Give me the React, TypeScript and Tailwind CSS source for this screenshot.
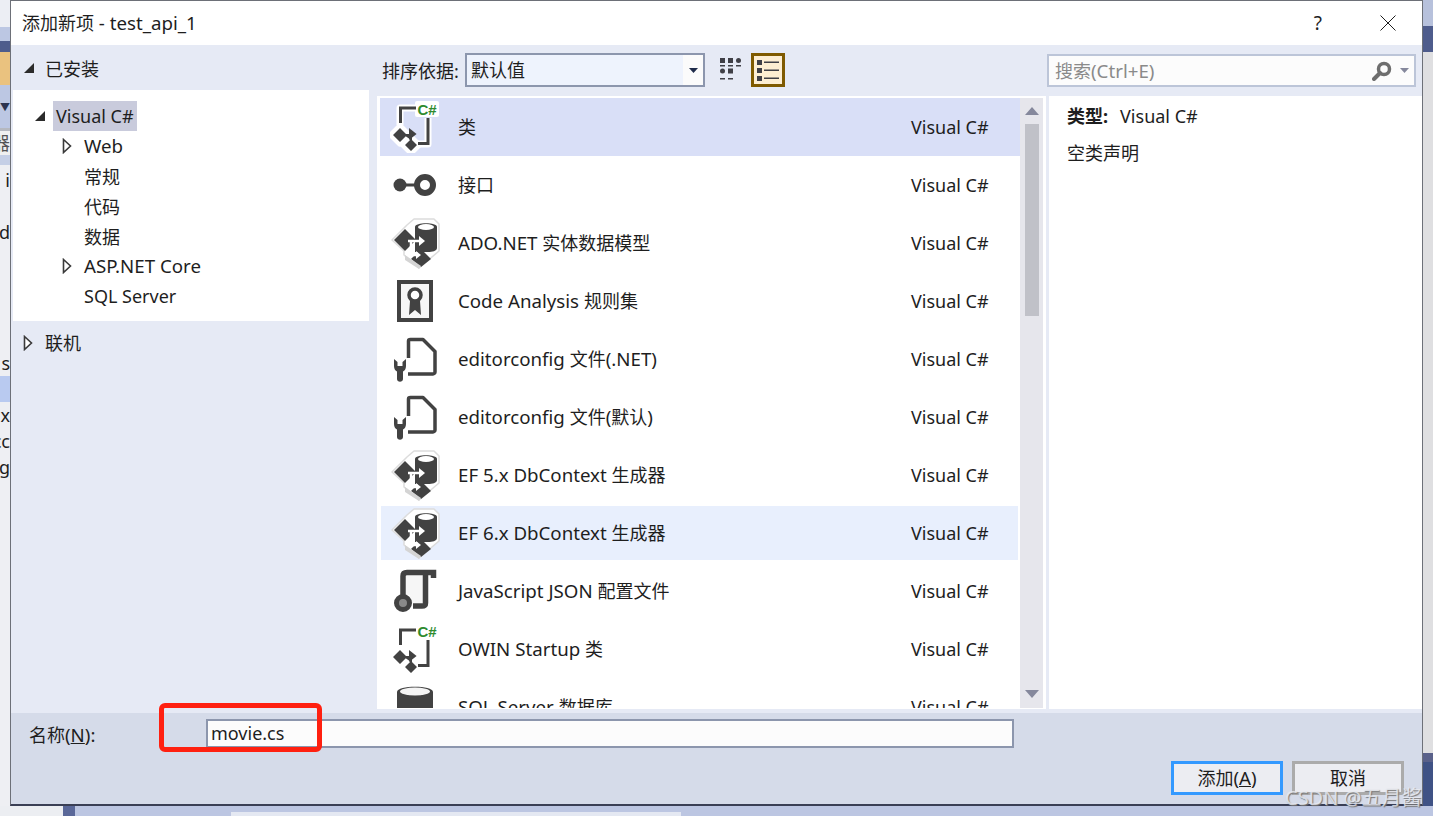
import React from "react";

const D = "#424242";

/* Latin runs sit a touch larger than the CJK ones in the reference's UI font */
function T({ s }: { s: string }) {
  return (
    <>
      {s.split(/([\x00-\x7F]+)/).map((p, i) =>
        /[\x00-\x7F]/.test(p) ? (
          <span key={i} className="text-[18.700px]">{p}</span>
        ) : (
          <React.Fragment key={i}>{p}</React.Fragment>
        ),
      )}
    </>
  );
}

const Filled = () => (
  <svg width="12" height="12" viewBox="0 0 12 12" className="shrink-0"><path d="M11 1V11H1Z" fill="#2b2b2b" /></svg>
);
const Hollow = () => (
  <svg width="10" height="16" viewBox="0 0 10 16" className="shrink-0"><path d="M1.500 1.500L8.500 8L1.500 14.500Z" fill="#fff" stroke="#3a3a3a" strokeWidth="1.600" /></svg>
);

const ClassIcon = () => (
  <svg width="52" height="52" viewBox="0 0 52 52">
    <g stroke="#fff" strokeWidth="7" fill="none" strokeLinejoin="round">
      <path d="M26 7H10V24M38 17V43H27" />
      <path d="M2 34L10 26L18 34L10 42ZM14 44L21 37L28 44L21 51Z" fill="#fff" />
    </g>
    <rect x="25" y="0" width="24" height="16" rx="2" fill="#fff" />
    <path d="M26 7H10.500V22M38 17V42.500H28" stroke={D} strokeWidth="3" fill="none" />
    <path d="M3 34L10 27L17 34L10 41ZM15 44L21 38L27 44L21 50Z" fill={D} />
    <path d="M14 34H21V39M20 29L25 33L20 37Z" stroke={D} strokeWidth="2" fill={D} />
    <text x="27.500" y="14" fill="#2e8b2e" fontSize="15" fontWeight="700" fontFamily="'Liberation Sans',sans-serif">C#</text>
  </svg>
);

const InterfaceIcon = () => (
  <svg width="52" height="52" viewBox="0 0 52 52">
    <circle cx="10" cy="26" r="6.500" fill={D} />
    <path d="M14 26H26" stroke={D} strokeWidth="3" />
    <circle cx="35" cy="26" r="8" fill="#fff" stroke={D} strokeWidth="6" />
  </svg>
);

const DbIcon = () => (
  <svg width="52" height="52" viewBox="0 0 52 52">
    <path d="M2 23L17 8L24 2H44L49 7V34L29 51L14 38V34Z" fill="#fff" stroke="#dcdcdc" strokeWidth="1.500" strokeLinejoin="round" />
    <path d="M25 10C25 5 47 5 47 10V31C47 34 42 35 38 35H25Z" fill={D} />
    <ellipse cx="36" cy="10" rx="8" ry="3" fill="#fff" />
    <path d="M4 23L15 12L26 23L15 34Z" fill={D} />
    <path d="M21 42L31 32L41 42L31 50Z" fill={D} />
    <path d="M18 24H30M21 24V38H28" stroke="#fff" strokeWidth="2.500" fill="none" />
    <path d="M29 19L35 24L29 29Z" fill="#fff" />
    <path d="M26 34L31 38L26 42Z" fill="#fff" />
    <path d="M15 38L15 43L29 52L31 49Z" fill="#d4d4d4" />
  </svg>
);

const CertIcon = () => (
  <svg width="52" height="52" viewBox="0 0 52 52">
    <rect x="9" y="7" width="32" height="38" fill="#f6f6f6" stroke={D} strokeWidth="4" />
    <circle cx="25" cy="20" r="6" fill="#fff" stroke={D} strokeWidth="3.500" />
    <path d="M20 26L19 40L25 35L31 40L30 26Z" fill={D} />
  </svg>
);

const ConfigIcon = () => (
  <svg width="52" height="52" viewBox="0 0 52 52">
    <path d="M18.500 25V8C18.500 7 19.500 6.500 20.500 6.500H33L45 18.500V39C45 40 44 41 43 41H18" fill="#fff" stroke={D} strokeWidth="3.500" strokeLinejoin="round" />
    <path d="M4 26V33C4 36 5.500 38 7 38.500V46C7 49.500 13 49.500 13 46V38.500C14.500 38 16 36 16 33V26L12.500 29V33H7.500V29Z" fill={D} />
  </svg>
);

const ScrollIcon = () => (
  <svg width="52" height="52" viewBox="0 0 52 52">
    <path d="M16 10H33V38H20V30H16Z" fill="#f6f6f6" />
    <path d="M13 33V11Q13 7.500 17 7.500H43.500V13M35.500 9V38Q35.500 41 32 41H23" fill="none" stroke={D} strokeWidth="5.500" />
    <circle cx="13" cy="38" r="6.500" fill="#8a8a8a" stroke={D} strokeWidth="5" />
  </svg>
);

const SqlIcon = () => (
  <svg width="52" height="52" viewBox="0 0 52 52">
    <path d="M7 11C7 4 43 4 43 11V52H7Z" fill={D} />
    <ellipse cx="25" cy="10.500" rx="15" ry="4" fill="#f4f4f4" />
  </svg>
);

const rows: { icon: React.ReactNode; t: string; bg?: string }[] = [
  { icon: <ClassIcon />, t: "类", bg: "sel" },
  { icon: <InterfaceIcon />, t: "接口" },
  { icon: <DbIcon />, t: "ADO.NET 实体数据模型" },
  { icon: <CertIcon />, t: "Code Analysis 规则集" },
  { icon: <ConfigIcon />, t: "editorconfig 文件(.NET)" },
  { icon: <ConfigIcon />, t: "editorconfig 文件(默认)" },
  { icon: <DbIcon />, t: "EF 5.x DbContext 生成器" },
  { icon: <DbIcon />, t: "EF 6.x DbContext 生成器", bg: "hover" },
  { icon: <ScrollIcon />, t: "JavaScript JSON 配置文件" },
  { icon: <ClassIcon />, t: "OWIN Startup 类" },
  { icon: <SqlIcon />, t: "SQL Server 数据库" },
];

const tree = [
  { t: <T s="Web" />, k: "w", arrow: true },
  { t: <span className="mt-[2px] block">常规</span>, k: "g" },
  { t: <span className="mt-[2px] block">代码</span>, k: "c" },
  { t: <span className="mt-[2px] block">数据</span>, k: "s" },
  { t: <T s="ASP.NET Core" />, k: "a", arrow: true },
  { t: "SQL Server", k: "q" },
];

function Row({ icon, t, bg }: { icon: React.ReactNode; t: string; bg?: string }) {
  if (bg === "hover")
    return (
      <div className="h-[58px] shrink-0 py-[2px]">
        <div className="ml-[2px] mr-[2px] flex h-[54px] items-center bg-[#e8effd]">
          <div className="w-[77px] shrink-0 pl-[9px]">{icon}</div>
          <span className="flex-1 whitespace-nowrap"><T s={t} /></span>
          <span className="w-[107px] shrink-0 whitespace-nowrap">Visual C#</span>
        </div>
      </div>
    );
  return (
    <div className={`flex h-[58px] shrink-0 items-center ${bg === "sel" ? "ml-[1px] bg-[#d9dff7]" : ""}`}>
      <div className={`shrink-0 ${bg === "sel" ? "w-[78px] pl-[10px]" : "w-[79px] pl-[11px]"}`}>{icon}</div>
      <span className="flex-1 whitespace-nowrap"><T s={t} /></span>
      <span className="w-[109px] shrink-0 whitespace-nowrap">Visual C#</span>
    </div>
  );
}

export default function App() {
  return (
    <div className="relative flex h-[816px] w-[1433px] flex-col overflow-hidden bg-[#bcc6e2] font-['Noto_Sans','Noto_Sans_CJK_SC',sans-serif] text-[18px] leading-[24px] text-[#1e1e1e]">
      <div className="flex h-[806px] shrink-0">
        {/* window behind: left edge */}
        <div className="flex w-[10px] shrink-0 flex-col overflow-hidden bg-[#eeeff3]">
          <div className="h-[27px] bg-[#eceef4]" />
          <div className="h-[14px] bg-[#bcc7e3]" />
          <div className="h-[11px] bg-[#4e5c8c]" />
          <div className="h-[33px] bg-[#eac27f]" />
          <div className="flex h-[43px] items-center justify-end bg-[#bcc7e3] text-[10px] text-[#2b3350]">▼</div>
          <div className="flex h-[27px] items-center justify-end border-t-[3px] border-[#b5b8c0] bg-[#f0f0f0] whitespace-nowrap text-[#555]">器</div>
          <div className="h-[10px] bg-[#c5cfe6]" />
          <div className="flex h-[30px] items-center justify-end whitespace-nowrap">i</div>
          <div className="h-[22px]" />
          <div className="flex h-[30px] items-center justify-end whitespace-nowrap">d</div>
          <div className="h-[103px]" />
          <div className="flex h-[26px] items-center justify-end whitespace-nowrap">s</div>
          <div className="h-[26px] bg-[#b9caf0]" />
          <div className="flex h-[26px] items-center justify-end whitespace-nowrap">x</div>
          <div className="flex h-[26px] items-center justify-end whitespace-nowrap">cc</div>
          <div className="flex h-[26px] items-center justify-end whitespace-nowrap">g</div>
        </div>

        {/* dialog */}
        <div className="flex w-[1413px] shrink-0 flex-col border-x border-t border-b-2 border-x-[#6d7078] border-t-[#6d7078] border-b-[#3a3f55] bg-[#e6eaf5]">
          <div className="flex h-[44px] shrink-0 items-center bg-white pl-[11px]">
            <span className="flex-1 whitespace-nowrap"><T s="添加新项 - test_api_1" /></span>
            <span className="mr-[58px] text-[19px]">?</span>
            <svg width="16" height="16" viewBox="0 0 16 16" className="mr-[26px]">
              <path d="M.5.5L15.500 15.500M15.500.5L.5 15.500" stroke="#1e1e1e" strokeWidth="1" />
            </svg>
          </div>

          <div className="flex h-[668px] shrink-0">
            {/* left */}
            <div className="ml-[2px] flex w-[356px] shrink-0 flex-col">
              <div className="flex h-[45px] shrink-0 items-center pl-[10px]">
                <Filled />
                <span className="ml-[10px] pt-[2px]">已安装</span>
              </div>
              <div className="flex h-[231px] shrink-0 flex-col bg-white pt-[11px]">
                <div className="flex h-[30px] items-center pl-[21px]">
                  <Filled />
                  <span className="ml-[7px] flex h-[30px] items-center bg-[#c9cbdc] px-[3px]">Visual C#</span>
                </div>
                {tree.map((n) => (
                  <div key={n.k} className="flex h-[30px] items-center pl-[49px]">
                    <div className="w-[22px] shrink-0">{n.arrow && <Hollow />}</div>
                    <span className="whitespace-nowrap">{n.t}</span>
                  </div>
                ))}
              </div>
              <div className="flex h-[44px] items-center pl-[10px]">
                <Hollow />
                <span className="ml-[12px]">联机</span>
              </div>
            </div>

            {/* middle */}
            <div className="ml-[8px] flex w-[669px] shrink-0 flex-col">
              <div className="flex h-[51px] shrink-0 items-start pt-[8px]">
                <span className="ml-[5px] mt-[6px] w-[83px] whitespace-nowrap">排序依据:</span>
                <div className="flex h-[34px] w-[240px] items-stretch border-2 border-[#8c96ad] bg-[#eef3fd]">
                  <span className="flex-1 pl-[4px] leading-[30px]">默认值</span>
                  <div className="flex w-[20px] items-center justify-center bg-[#fbfbfb]">
                    <svg width="9" height="5" viewBox="0 0 9 5"><path d="M0 0H9L4.500 5Z" fill="#1e2b4a" /></svg>
                  </div>
                </div>
                <svg width="22" height="24" viewBox="0 0 22 24" className="ml-[15px] mt-[5px]" fill="#3f3f46">
                  <rect x="0" y="0" width="5" height="5" />
                  <rect x="8" y="0" width="5" height="5" />
                  <circle cx="18.500" cy="2.500" r="2.500" />
                  <rect x="0" y="7" width="5" height="1.500" />
                  <rect x="8" y="7" width="5" height="1.500" />
                  <rect x="16" y="7" width="5" height="1.500" />
                  <circle cx="2.500" cy="13" r="2.500" />
                  <rect x="8" y="10.500" width="5" height="5" />
                  <rect x="0" y="20" width="5" height="1.500" />
                  <rect x="8" y="20" width="5" height="1.500" />
                </svg>
                <div className="ml-[9px] flex h-[34px] w-[34px] items-center justify-center border-[3px] border-[#7f5a00] bg-[#fdeed2]">
                  <svg width="24" height="24" viewBox="0 0 24 24" fill="#3f3f46">
                    <rect x="1" y="2" width="5" height="5" />
                    <rect x="1" y="10" width="5" height="5" />
                    <rect x="1" y="18" width="5" height="5" />
                    <rect x="8" y="3.500" width="15" height="1.500" />
                    <rect x="8" y="11.500" width="15" height="1.500" />
                    <rect x="8" y="19.500" width="15" height="1.500" />
                  </svg>
                </div>
              </div>
              <div className="flex h-[613px] shrink-0 bg-white pl-[2px] pt-[2px] pb-[1px]">
                <div className="flex min-w-0 flex-1 flex-col overflow-hidden">
                  {rows.map((r) => (
                    <Row key={r.t} {...r} />
                  ))}
                </div>
                <div className="mr-[3px] flex w-[23px] shrink-0 flex-col items-center bg-[#e6e6ec]">
                  <svg width="14" height="8" viewBox="0 0 14 8" className="mt-[9px] shrink-0"><path d="M7 0L14 8H0Z" fill="#85889c" /></svg>
                  <div className="mt-[9px] h-[192px] w-[14px] shrink-0 bg-[#c0c1c8]" />
                  <div className="flex-1" />
                  <svg width="14" height="8" viewBox="0 0 14 8" className="mb-[10px] shrink-0"><path d="M0 0H14L7 8Z" fill="#85889c" /></svg>
                </div>
              </div>
            </div>

            {/* right */}
            <div className="ml-[3px] flex min-w-0 flex-1 flex-col">
              <div className="flex h-[51px] shrink-0 items-start pt-[9px]">
                <div className="flex h-[33px] w-[369px] -translate-x-[2px] items-center border-2 border-[#bcc5d8] bg-[#fcfcfc] pl-[6px] pr-[5px] text-[#8a8a8a]">
                  <span className="flex-1 whitespace-nowrap"><T s="搜索(Ctrl+E)" /></span>
                  <svg width="20" height="20" viewBox="0 0 20 20">
                    <circle cx="12" cy="8" r="5.500" fill="none" stroke="#6e6e6e" strokeWidth="3.500" />
                    <path d="M8 12L2 18" stroke="#6e6e6e" strokeWidth="4" strokeLinecap="round" />
                  </svg>
                  <svg width="9" height="5" viewBox="0 0 9 5" className="ml-[8px]"><path d="M0 0H9L4.500 5Z" fill="#85889c" /></svg>
                </div>
              </div>
              <div className="h-[613px] bg-white pl-[18px] pt-[8px]">
                <div className="h-[26px]">
                  <span className="font-bold">类型:</span>
                  <span className="ml-[12px]">Visual C#</span>
                </div>
                <div className="mt-[11px]">空类声明</div>
              </div>
            </div>
          </div>

          {/* footer */}
          <div className="flex min-h-0 flex-1 flex-col bg-[#d5dbe9]">
            <div className="flex h-[40px] shrink-0 items-center">
              <span className="ml-[18px] mt-[4px] w-[177px] whitespace-nowrap">
                <T s="名称(" /><span className="text-[18.700px] underline">N</span><T s="):" />
              </span>
              <div className="flex h-[29px] w-[808px] items-center border-2 border-[#8c96ad] bg-[#fcfcfc] pl-[3px]">movie.cs</div>
            </div>
            <div className="mt-[8px] flex justify-end gap-[9px] pr-[18px]">
              <button className="h-[34px] w-[112px] border-[3px] border-[#3399ff] bg-[#ecedf2]">
                <T s="添加(" /><span className="text-[18.700px] underline">A</span><T s=")" />
              </button>
              <button className="h-[34px] w-[112px] border-[3px] border-[#ababab] bg-[#ecedf2]">取消</button>
            </div>
          </div>
        </div>

        {/* window behind: right edge */}
        <div className="flex w-[10px] shrink-0 flex-col bg-[#dfdfe1]">
          <div className="h-[26px] bg-[#b7c1dc]" />
          <div className="h-[26px] bg-[#4e5c8c]" />
          <div className="h-[701px]" />
          <div className="h-[9px] bg-[#5a618a]" />
          <div className="flex-1 bg-[#3f5285]" />
        </div>
      </div>

      {/* window behind: bottom edge */}
      <div className="flex flex-1">
        <div className="w-[63px] bg-[#eceef2]" />
        <div className="w-[12px] bg-[#5a6899]" />
        <div className="w-[156px]" />
        <div className="mt-[6px] w-[450px] bg-[#e4e8f2]" />
      </div>

      {/* annotation and watermark drawn over the screenshot */}
      <div className="absolute left-[159px] top-[703px] h-[49px] w-[163px] rounded-[6px] border-[5px] border-[#ff2010]" />
      <div className="absolute left-[1285px] top-[786px] whitespace-nowrap text-[20px] text-[#eceef4]/80 [text-shadow:1px_1px_1px_#777]">CSDN @五月酱</div>
    </div>
  );
}
